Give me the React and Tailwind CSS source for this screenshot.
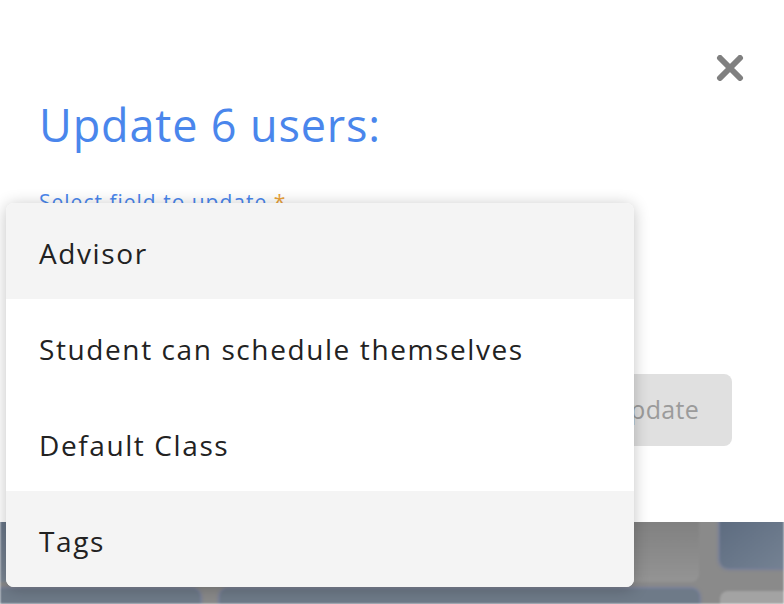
const fields = ["Advisor", "Student can schedule themselves", "Default Class", "Tags"];

function CloseIcon() {
  return (
    <svg width="28" height="26" viewBox="0 0 28 26" className="block">
      <path d="M4 3 L24 23 M24 3 L4 23" stroke="#808080" strokeWidth="6" strokeLinecap="round" fill="none" />
    </svg>
  );
}

// blurred page behind the modal
function Backdrop() {
  return (
    <div className="absolute inset-0 bg-[#8a8a8a] blur-[1px] overflow-hidden">
      <div className="ml-[-20px] mt-[490px] grid grid-cols-[220px_479px_100px] gap-x-[20px] gap-y-[7px]">
        <div className="h-[92px] rounded-lg bg-gradient-to-b from-[#5e6c80] to-[#7c8795]" />
        <div className="h-[92px] rounded-lg bg-gradient-to-b from-[#777] to-[#949494]" />
        <div className="h-[78px] ml-[1px] rounded-lg bg-gradient-to-br from-[#56657a] to-[#7b8898] shadow-[0_0_4px_#5a6fb0]" />
        <div className="h-[40px] rounded-lg bg-[#6e7a88] shadow-[0_0_4px_#5a6fb0]" />
        <div className="h-[40px] rounded-lg bg-[#6e7a88] shadow-[0_0_4px_#5a6fb0]" />
        <div className="h-[40px] ml-[1px] mt-[2px] rounded-lg bg-[#a3a3a3]" />
      </div>
    </div>
  );
}

export default function App() {
  return (
    <div className="relative w-[784px] h-[604px] overflow-hidden" style={{ fontFamily: '"Open Sans", "Noto Sans", sans-serif' }}>
      <Backdrop />

      {/* modal */}
      <div className="absolute left-0 top-0 w-full h-[522px] bg-white flex flex-col">
        <div className="flex justify-end pt-[55px] pr-[40px]">
          <button className="p-0">
            <CloseIcon />
          </button>
        </div>
        <div className="flex flex-col pl-[39px] pr-[52px]">
          <h2 className="mt-[16px] text-[45px] leading-[56px] text-[#4a86ec] tracking-[0.85px]">Update 6 users:</h2>
          <label className="block mt-[37px] text-[21px] leading-[24px] tracking-[1px] text-[#4a86ec]">
            Select field to update <span className="text-[#e9a23b]">*</span>
          </label>
          <div className="mt-[8px] h-[52px] w-[560px] rounded-lg border border-[#ddd]" />
          <div className="flex justify-end mt-[100px]">
            <button className="h-[72px] px-[33px] rounded-lg bg-[#e0e0e0] text-[25px] tracking-[0.3px] text-[#9b9b9b]">Update</button>
          </div>
        </div>
      </div>

      {/* open select menu */}
      <div className="absolute left-[6px] top-[203px] w-[628px] rounded-lg bg-white overflow-hidden shadow-[0_2px_16px_rgba(0,0,0,0.24)]">
        {fields.map((f, i) => (
          <div
            key={f}
            className={`h-[96px] flex items-center pt-[3px] px-[33px] text-[28px] tracking-[1.6px] text-[#222] ${i === 0 || i === 3 ? "bg-[#f4f4f4]" : "bg-white"}`}
          >
            {f}
          </div>
        ))}
      </div>
    </div>
  );
}
